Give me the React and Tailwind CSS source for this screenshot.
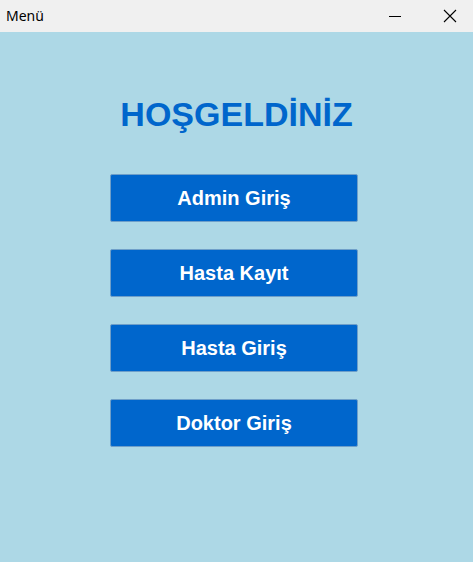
import React from "react";

const BUTTONS = ["Admin Giriş", "Hasta Kayıt", "Hasta Giriş", "Doktor Giriş"];

const App = () => {
  return (
    <div className="w-[473px] h-[562px] flex flex-col bg-[#add8e6] font-['Liberation_Sans',Arial,sans-serif]">
      {/* Window title bar */}
      <div className="h-8 bg-[#f0f0f0] flex items-center justify-between pl-[6px]">
        <span className="text-[14px] text-black font-['Noto_Sans','Open_Sans',sans-serif] leading-none">
          Menü
        </span>
        <div className="flex h-full">
          <button className="w-[46px] h-full flex items-center justify-center mr-[9px]">
            <svg width="12" height="12" viewBox="0 0 12 12">
              <path d="M0 6.5h12" stroke="#000" strokeWidth="1" />
            </svg>
          </button>
          <button className="w-[46px] h-full flex items-center justify-center">
            <svg width="14" height="14" viewBox="0 0 14 14">
              <path d="M1 1l12 12M13 1L1 13" stroke="#000" strokeWidth="1.1" />
            </svg>
          </button>
        </div>
      </div>

      {/* Content */}
      <div className="flex flex-col items-center pt-[62px]">
        <h1 className="text-[34px] font-bold text-[#0066cc] leading-[40px]">
          HOŞGELDİNİZ
        </h1>
        <div className="flex flex-col gap-[27px] mt-[40px] mr-[5px]">
          {BUTTONS.map((label) => (
            <button
              key={label}
              className="w-[248px] h-[48px] bg-[#0066cc] border border-[#6f9fc9] rounded-[2px] text-white text-[20px] font-bold"
            >
              {label}
            </button>
          ))}
        </div>
      </div>
    </div>
  );
};

export default App;
